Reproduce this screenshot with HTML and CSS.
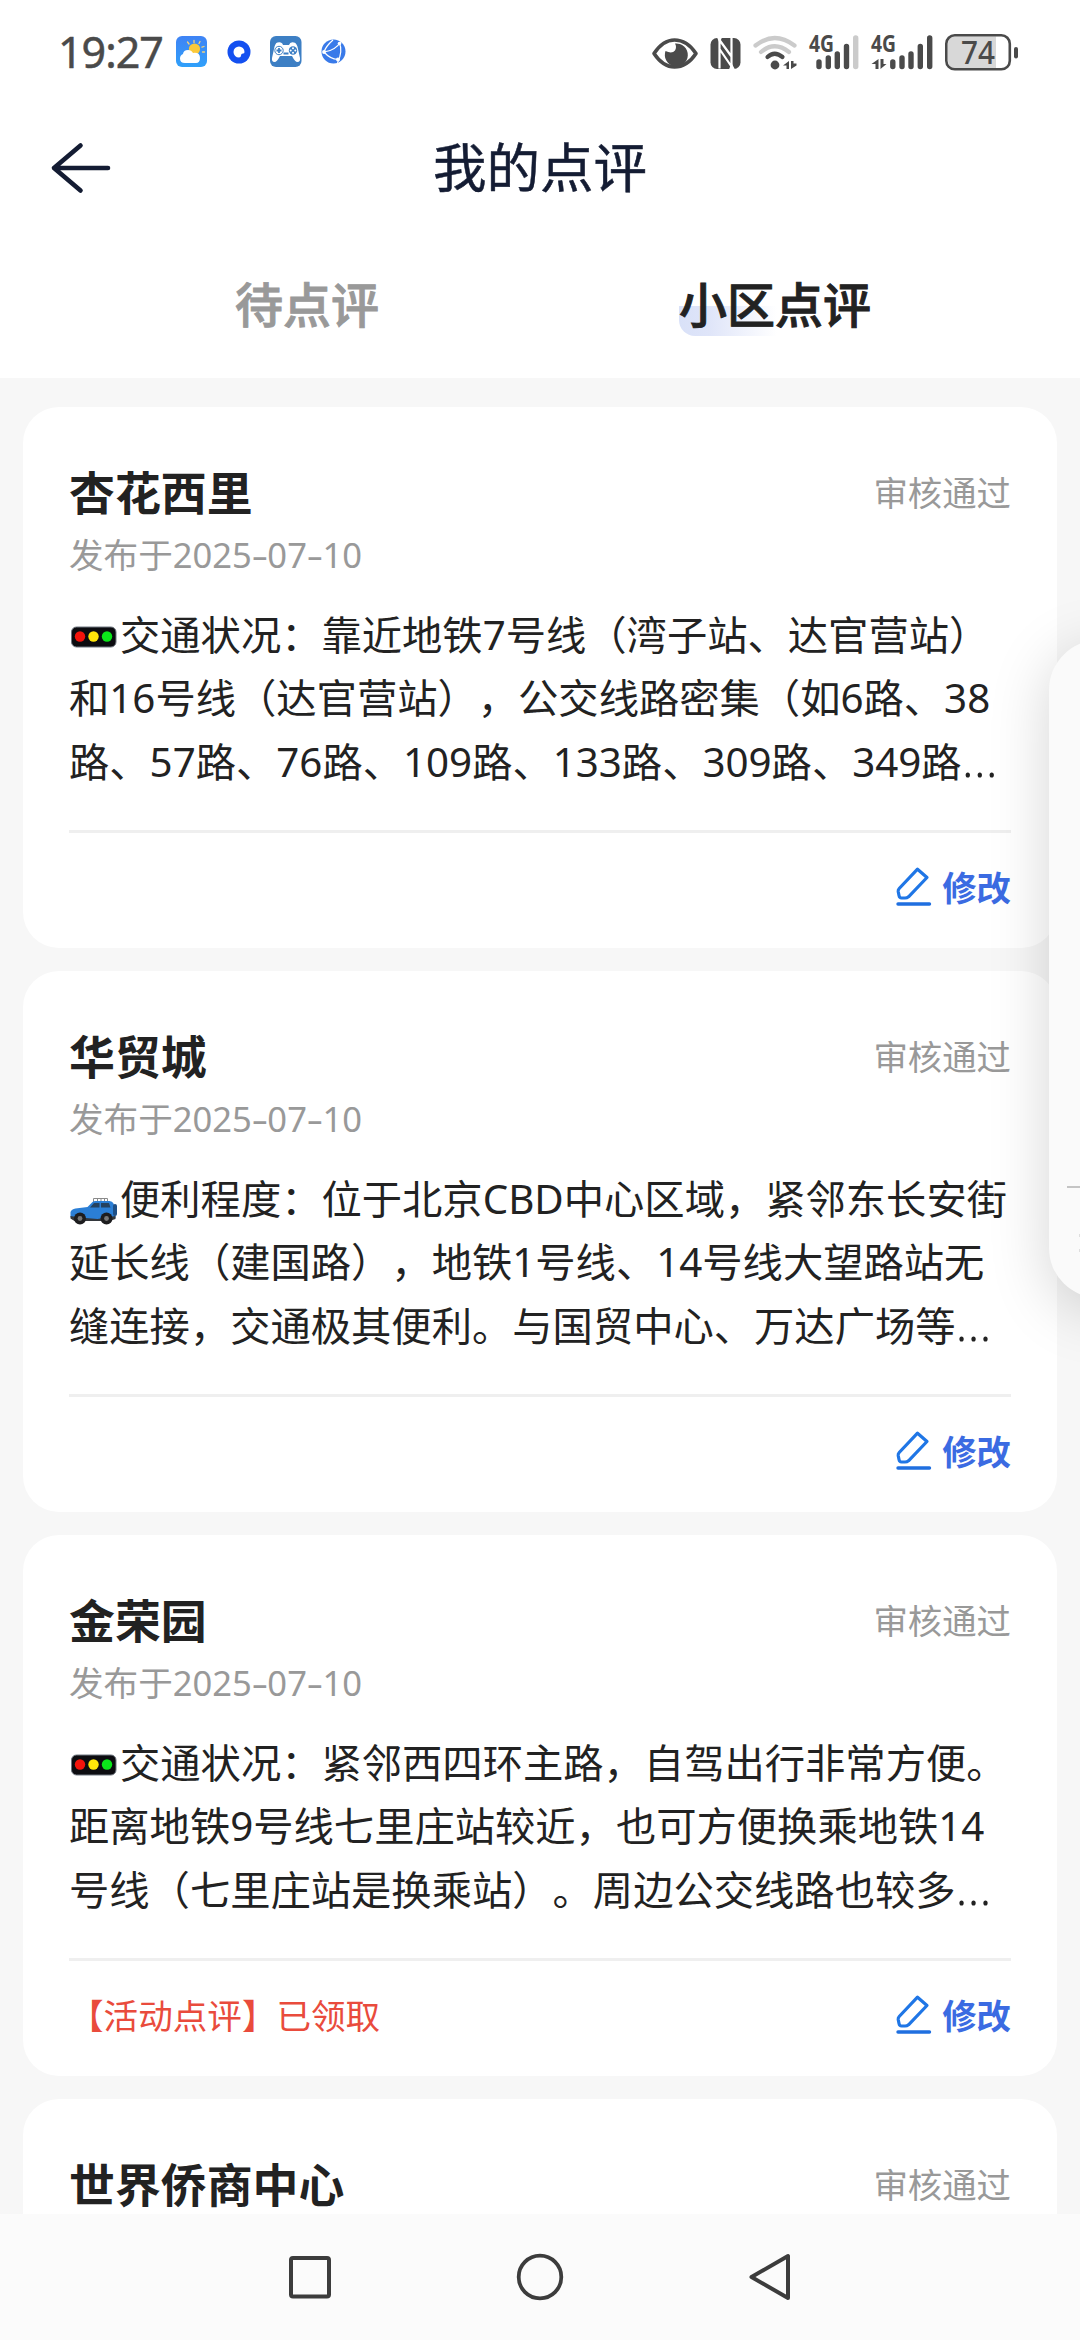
FILE: index.html
```
<!DOCTYPE html>
<html lang="zh-CN">
<head>
<meta charset="utf-8">
<title>我的点评</title>
<link rel="stylesheet" href="styles.css">
</head>
<body>
<svg class="defs" width="0" height="0" aria-hidden="true">
  <symbol id="pen" viewBox="0 0 36 40">
    <path d="M21.5 3.2 L31 11.5 L12.5 30.8 Q11 32 9 32 L5.5 32 Q3.5 32 3 29.5 L2.2 25.5 Q2 23.8 3.2 22.5 Z" fill="none" stroke="#1f76e6" stroke-width="3.2" stroke-linejoin="round"/>
    <path d="M2 38 H33.5" stroke="#1f6fe0" stroke-width="3.4" stroke-linecap="round"/>
  </symbol>
  <symbol id="lights" viewBox="0 0 50 24">
    <rect x="2" y="2" width="44.500" height="20" rx="5" fill="#0c0c10" stroke="#6f7780" stroke-width="1"/>
    <circle cx="10.500" cy="11.500" r="5.200" fill="#f3140c"/>
    <circle cx="24" cy="11.500" r="5.200" fill="#ffe60a"/>
    <circle cx="37.500" cy="11.500" r="5.200" fill="#0be61a"/>
  </symbol>
  <symbol id="jeep" viewBox="0 0 50 30">
    <path d="M24 6 V2.500 H38 V6 M28 2.500 V6 M31.500 2.500 V6 M35 2.500 V6" fill="none" stroke="#8a8a8a" stroke-width="1"/>
    <path d="M1 16 Q2 13 6 12.500 L18 11 L23 6 Q24 5 26 5 H40 Q43 5 44 7.500 L46 13 V22 L40 24 H4 L1 21 Z" fill="#2b7fd6"/>
    <path d="M20.500 11.500 L24.500 7 H30 V11.500 Z M31.500 7 H39.500 L41 11.500 H31.500 Z" fill="#25425f"/>
    <path d="M1 20 L10 21.500 L28 23 L46 20 V23 L40 25 H5 L1 22.500 Z" fill="#33373c"/>
    <rect x="43.500" y="8" width="4" height="12" rx="2" fill="#1e4f86"/>
    <g fill="#1d1d1f"><circle cx="10.500" cy="22.500" r="6"/><circle cx="37" cy="22.500" r="6"/></g>
    <g fill="#777"><circle cx="10.500" cy="22.500" r="2.400"/><circle cx="37" cy="22.500" r="2.400"/></g>
  </symbol>
</svg>

<div class="phone">
  <div class="statusbar">
    <span class="clock">19:27</span>
    <svg class="ic-weather" width="32" height="32" viewBox="0 0 32 32">
      <defs><linearGradient id="sky" x1="0" y1="0" x2="0" y2="1"><stop offset="0" stop-color="#3f83f5"/><stop offset="1" stop-color="#2fa0fa"/></linearGradient></defs>
      <rect width="31" height="31" rx="6" fill="url(#sky)"/>
      <g stroke="#f3d27a" stroke-width="1.300" stroke-linecap="round"><path d="M18 4.500 V6.500 M11.500 6 L13 8 M24 5.500 L23 7.500 M28 10.500 L26 11.200 M28.500 16 H26.500"/></g>
      <circle cx="18.500" cy="13" r="5.600" fill="#fbc93a"/>
      <path d="M9 27 Q4 27 4 22.500 Q4 19 7 18 Q7.500 14 12 14 Q15.500 14 17 17 Q24 16 24 22 Q24 27 20 27 Z" fill="#fff"/>
    </svg>
    <svg class="ic-ring" width="24" height="24" viewBox="0 0 24 24">
      <circle cx="12" cy="12" r="11.500" fill="#1450f0"/>
      <path d="M12 6.500 A5.500 5.500 0 0 1 17.500 12 Q17.500 13.500 16 13.500 Q14 13.500 14 15.500 Q14 17.500 12 17.500 A5.500 5.500 0 0 1 12 6.500 Z" fill="#fff"/>
    </svg>
    <svg class="ic-game" width="32" height="32" viewBox="0 0 32 32">
      <rect width="31.500" height="31" rx="6" fill="#3d7fc4"/>
      <path d="M7.500 6.500 Q12 5.500 13 9 H19 Q20 5.500 24 6.500 Q27 7 28 13 L30 22 Q30.500 26 27.500 26 Q25 26 22 20 H10 Q7 26 4.500 26 Q1.500 26 2 22 L4 13 Q5 7 7.500 6.500 Z" fill="#fff"/>
      <circle cx="9" cy="14.500" r="4.200" fill="none" stroke="#3d7fc4" stroke-width="1"/>
      <path d="M9 12 V17 M6.500 14.500 H11.500 M13.500 17.500 H18.500" stroke="#3d7fc4" stroke-width="1.800"/>
      <circle cx="23" cy="14.500" r="4.200" fill="#3d7fc4"/>
      <g fill="#fff"><circle cx="23" cy="12.200" r="1"/><circle cx="23" cy="16.800" r="1"/><circle cx="20.700" cy="14.500" r="1"/><circle cx="25.300" cy="14.500" r="1"/></g>
    </svg>
    <svg class="ic-globe" width="25" height="25" viewBox="0 0 25 25">
      <circle cx="12.500" cy="12.500" r="12" fill="#397ae9"/>
      <path d="M3 13 Q14 12 20 2.500 M3 13 Q9 20 17 20.500 M18.500 4 Q22 12 16.500 24 M3 13 Q5 7 12 1" fill="none" stroke="#fff" stroke-width="1.200"/>
      <g fill="#fff"><circle cx="3" cy="13" r="1.900"/><circle cx="18.500" cy="4.500" r="1.800"/><circle cx="17" cy="20.500" r="2"/></g>
    </svg>
    <span class="spring"></span>
    <svg class="status-icons" width="380" height="60" viewBox="651 20 380 60">
      <g fill="none" stroke="#4a4a4a">
        <path d="M654 51.500 Q663 38 674.500 38 Q687 38 696 51.500 Q687 65 674.500 65 Q663 65 654 51.500 Z" stroke-width="3.600" stroke-linejoin="round"/>
      </g>
      <path d="M675 41.500 A11.500 11.500 0 1 1 665.500 49 Q672 52 675 48.500 Q677 45 675 41.500 Z" fill="#4a4a4a"/>
      <rect x="710.500" y="36" width="30" height="31" rx="6.500" fill="#4a4a4a"/>
      <path d="M719.500 66.500 V38 L731.500 54.500 V36 M719.500 47 L731.500 64.500 V54" fill="none" stroke="#fff" stroke-width="2.200"/>
      <path d="M717 35.500 H722 L719.500 41 Z M729 67.500 H735 L731.500 61 Z" fill="#fff"/>
      <g fill="none" stroke-linecap="round" stroke-width="4.200">
        <path d="M755.500 43.500 Q774.500 28.500 794.500 43.500" stroke="#cbcbcb"/>
        <path d="M761 50 Q774.500 38.500 789 50" stroke="#cbcbcb"/>
        <path d="M767.500 55 Q774.500 48.500 782.500 55" stroke="#4a4a4a"/>
      </g>
      <circle cx="775" cy="63" r="4.400" fill="#4a4a4a"/>
      <g fill="#4a4a4a"><path d="M789 59 V67 H786.500 V63.500 H783 Z"/><path d="M791 59 V67 L796.500 63.500 V61.500 H793.500 V59 Z"/></g>
      <g class="net">
        <text x="809" y="50" textLength="25" lengthAdjust="spacingAndGlyphs">4G</text>
        <text x="871" y="50" textLength="25" lengthAdjust="spacingAndGlyphs">4G</text>
      </g>
      <g stroke="#4a4a4a" stroke-width="5.400" stroke-linecap="round">
        <path d="M819 60 V64.500 M828.300 56 V64.500 M837.300 52 V64.500 M846.500 44.500 V64.500"/>
        <path d="M855.700 36 V64.500" stroke="#cbcbcb"/>
        <path d="M892.800 60 V64.500 M902 56 V64.500 M911 52 V64.500 M920.300 44.500 V64.500 M929.700 36 V64.500"/>
      </g>
      <g fill="#4a4a4a"><path d="M878.500 57 V67 H875.500 V62 H871.500 Z"/><path d="M880.500 57 V67 L886.500 62 H883.500 V57 Z"/></g>
      <path d="M955 34.500 H996 V66 H955 Q948 66 948 58 V42 Q948 34.500 955 34.500 Z" fill="#d8d8d8"/>
      <rect x="946.300" y="33.300" width="63.500" height="34" rx="8.500" fill="none" stroke="#4a4a4a" stroke-width="2.600"/>
      <rect x="1014" y="45" width="4" height="11.500" rx="2" fill="#4a4a4a"/>
      <text class="batt" x="961" y="62" textLength="34" lengthAdjust="spacingAndGlyphs">74</text>
    </svg>
  </div>

  <header class="titlebar">
    <svg class="back" width="62" height="56" viewBox="0 0 62 56"><path d="M30.500 5.500 L4 28 L30.500 50.500 M4 28 H58" fill="none" stroke="#141c33" stroke-width="4.600" stroke-linecap="round" stroke-linejoin="round"/></svg>
    <h1>我的点评</h1>
  </header>

  <nav class="tabs">
    <span class="tab">待点评</span>
    <span class="tab active"><b>小区点评</b></span>
  </nav>

  <main class="list">
    <article class="card">
      <div class="head"><h2>杏花西里</h2><span class="state">审核通过</span></div>
      <p class="date">发布于2025<i>-</i>07<i>-</i>10</p>
      <div class="body">
        <p><svg class="emoji lights"><use href="#lights"/></svg>交通状况：靠近地铁7号线（湾子站、达官营站）</p>
        <p>和16号线（达官营站），公交线路密集（如6路、38</p>
        <p>路、57路、76路、109路、133路、309路、349路<span class="dots">…</span></p>
      </div>
      <div class="foot"><span class="award"></span><a class="edit"><svg width="36" height="40"><use href="#pen"/></svg>修改</a></div>
    </article>

    <article class="card">
      <div class="head"><h2>华贸城</h2><span class="state">审核通过</span></div>
      <p class="date">发布于2025<i>-</i>07<i>-</i>10</p>
      <div class="body">
        <p><svg class="emoji jeep"><use href="#jeep"/></svg>便利程度：位于北京CBD中心区域，紧邻东长安街</p>
        <p>延长线（建国路），地铁1号线、14号线大望路站无</p>
        <p>缝连接，交通极其便利。与国贸中心、万达广场等<span class="dots">…</span></p>
      </div>
      <div class="foot"><span class="award"></span><a class="edit"><svg width="36" height="40"><use href="#pen"/></svg>修改</a></div>
    </article>

    <article class="card">
      <div class="head"><h2>金荣园</h2><span class="state">审核通过</span></div>
      <p class="date">发布于2025<i>-</i>07<i>-</i>10</p>
      <div class="body">
        <p><svg class="emoji lights"><use href="#lights"/></svg>交通状况：紧邻西四环主路，自驾出行非常方便。</p>
        <p>距离地铁9号线七里庄站较近，也可方便换乘地铁14</p>
        <p>号线（七里庄站是换乘站）。周边公交线路也较多<span class="dots">…</span></p>
      </div>
      <div class="foot"><span class="award">【活动点评】已领取</span><a class="edit"><svg width="36" height="40"><use href="#pen"/></svg>修改</a></div>
    </article>

    <article class="card">
      <div class="head"><h2>世界侨商中心</h2><span class="state">审核通过</span></div>
    </article>
  </main>

  <footer class="navbar">
    <svg width="48" height="52" viewBox="0 0 48 52"><rect x="5" y="7" width="38" height="38.500" rx="2" fill="none" stroke="#3c3c3c" stroke-width="4"/></svg>
    <svg width="48" height="52" viewBox="0 0 48 52"><circle cx="24" cy="26" r="21.300" fill="none" stroke="#3c3c3c" stroke-width="3.800"/></svg>
    <svg width="48" height="52" viewBox="0 0 48 52"><path d="M42 5 V47 L5.500 26 Z" fill="none" stroke="#3c3c3c" stroke-width="4" stroke-linejoin="round"/></svg>
  </footer>

  <aside class="drawer"><span class="rule"></span><span class="dot"></span><span class="dot"></span></aside>
</div>
</body>
</html>
```
FILE: styles.css
```
* { box-sizing: border-box; margin: 0; padding: 0; }

body {
  width: 1080px;
  height: 2340px;
  overflow: hidden;
  font-family: "Noto Sans", "Noto Sans CJK SC", sans-serif;
  text-spacing-trim: space-all;
  color: #222;
  background: #f7f7f7;
}

.defs { position: absolute; }
svg { display: block; flex: none; overflow: visible; }

.phone {
  position: relative;
  display: flex;
  flex-direction: column;
  width: 1080px;
  height: 2340px;
  overflow: hidden;
}

/* status bar */
.statusbar {
  display: flex;
  align-items: center;
  height: 103px;
  padding: 0 49px 0 58px;
  background: #fff;
  flex: none;
}
.clock {
  width: 118px;
  font-size: 43px;
  line-height: 60px;
  letter-spacing: -1px;
  color: #4a4a4a;
  -webkit-text-stroke: .5px #4a4a4a;
  white-space: nowrap;
}
.ic-ring { margin-left: 19px; }
.ic-game { margin-left: 19px; }
.ic-globe { margin-left: 19px; }
.spring { flex: 1; }
.net text { font: 700 23px "Noto Sans", sans-serif; fill: #4a4a4a; }
.batt { font: 500 32px "Noto Sans", sans-serif; fill: #4a4a4a; }

/* title */
.titlebar {
  display: grid;
  grid-template-columns: 62px 1fr 62px;
  align-items: center;
  height: 130px;
  padding: 0 50px;
  background: #fff;
  flex: none;
}
.titlebar h1 {
  font-size: 53.5px;
  line-height: 80px;
  font-weight: 400;
  text-align: center;
  color: #141c33;
  -webkit-text-stroke: .5px #141c33;
}

/* tabs */
.tabs {
  display: grid;
  grid-template-columns: 1fr 1fr;
  height: 145px;
  padding: 36px 71px 0 73px;
  background: #fff;
  flex: none;
}
.tab {
  justify-self: center;
  font-size: 48px;
  line-height: 72px;
  font-weight: 500;
  color: #999;
  -webkit-text-stroke: .9px currentColor;
}
.tab.active { color: #222; }
.tab b {
  display: block;
  height: 67px;
  font-weight: 500;
  background: linear-gradient(90deg, #d9e1f8 0, #dfe5f9 30px, #fff 98px) 0 100% / 100% 30px no-repeat;
  border-radius: 0 0 0 16px;
}

/* review cards */
.list {
  display: flex;
  flex-direction: column;
  gap: 23px;
  height: 1836px;
  padding: 29px 23px 0;
  overflow: hidden;
  flex: none;
}
.card {
  flex: none;
  height: 541px;
  padding: 50px 46px 0 46px;
  border-radius: 36px;
  background: #fff;
}
.head { display: flex; align-items: center; justify-content: space-between; height: 70px; }
.head h2 { font-size: 45.9px; line-height: 70px; font-weight: 700; }
.state { margin-top: -3px; font-size: 34.4px; color: #999; }
.date { height: 56px; font-size: 34.6px; line-height: 56px; color: #999; white-space: nowrap; }
.date i { display: inline-block; width: 15.5px; text-align: center; font-style: normal; transform: scaleX(1.5); }
.body { padding-top: 20px; }
.body p { height: 63.3px; font-size: 40.3px; line-height: 63.3px; white-space: nowrap; }
.emoji { display: inline-block; width: 51px; vertical-align: baseline; }
.lights { height: 24px; margin-bottom: 1px; }
.jeep { height: 30px; margin-bottom: -9px; transform: translateY(3px); }
.dots { font-size: 1.22em; font-weight: 300; line-height: 0; }
.foot {
  display: flex;
  align-items: center;
  justify-content: space-between;
  height: 110px;
  margin-top: 37px;
  border-top: 3px solid #efefef;
}
.award { font-size: 34.6px; color: #e94b3c; }
.edit { display: flex; align-items: center; gap: 10px; font-size: 34.4px; font-weight: 700; color: #3b6be2; }

/* system navigation */
.navbar {
  display: flex;
  justify-content: center;
  gap: 182px;
  height: 126px;
  padding-top: 37px;
  background: #fbfbfb;
  flex: none;
}

/* side drawer peeking in over the list */
.drawer {
  position: absolute;
  left: 1049px;
  top: 640px;
  display: flex;
  flex-direction: column;
  align-items: flex-end;
  width: 120px;
  height: 658px;
  padding: 546px 89px 0 0;
  border-radius: 50px;
  background: #fafafa;
  box-shadow: 0 12px 60px rgba(0, 0, 0, .17);
}
.rule { width: 13px; height: 2px; background: #c4c4c4; }
.dot { width: 1px; height: 3px; margin-top: 46px; background: #dedede; }
.dot + .dot { margin-top: 12px; }
```
